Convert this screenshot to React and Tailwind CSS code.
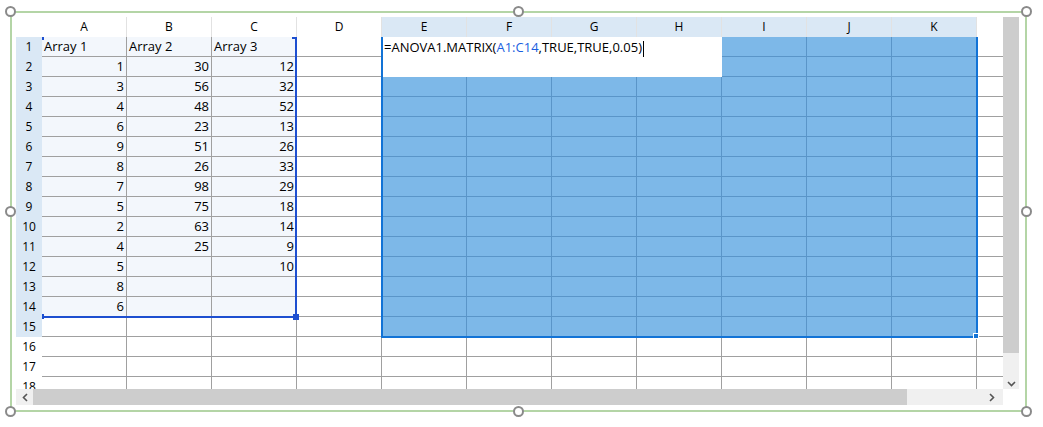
import React from 'react';

const cols = ['A', 'B', 'C', 'D', 'E', 'F', 'G', 'H', 'I', 'J', 'K', 'L'];
const data = [
  ['Array 1', 'Array 2', 'Array 3'],
  [1, 30, 12], [3, 56, 32], [4, 48, 52], [6, 23, 13], [9, 51, 26], [8, 26, 33],
  [7, 98, 29], [5, 75, 18], [2, 63, 14], [4, 25, 9], [5, '', 10], [8, '', ''], [6, '', ''],
];

const Handle = ({ cls }) => (
  <div className={`absolute w-[11px] h-[11px] rounded-full border-2 border-[#8a8a8a] bg-white ${cls}`} />
);

const App = () => {
  const rows = Array.from({ length: 18 }, (_, i) => i + 1);
  return (
    <div className="relative w-[1043px] h-[427px] bg-white overflow-hidden" style={{ fontFamily: '"Open Sans", "Noto Sans", sans-serif' }}>
      <div className="absolute left-[10px] top-[11px] w-[1017px] h-[401px] border-2 border-[#b4d5a6]" />
      <Handle cls="left-[5px] top-[6px]" />
      <Handle cls="left-[513px] top-[6px]" />
      <Handle cls="left-[1021px] top-[6px]" />
      <Handle cls="left-[5px] top-[206px]" />
      <Handle cls="left-[1021px] top-[206px]" />
      <Handle cls="left-[5px] top-[406px]" />
      <Handle cls="left-[513px] top-[406px]" />
      <Handle cls="left-[1021px] top-[406px]" />

      <div className="absolute left-[16px] top-[17px] w-[1003px] h-[388px] flex flex-col text-[13px] text-black">
        <div className="flex h-[372px]">
          <div className="relative w-[987px] overflow-hidden">
            {/* column header */}
            <div className="flex h-[20px]">
              <div className="w-[26px] shrink-0" />
              {cols.map((c, ci) => (
                <div key={c} className={`w-[85px] shrink-0 flex items-center justify-center text-[12px] border-r border-[#e2e2e2] ${ci >= 4 && ci <= 10 ? 'bg-[#dae8f5]' : 'bg-white'}`}>{c}</div>
              ))}
            </div>
            {rows.map((r) => (
              <div key={r} className="flex h-[20px]">
                <div className={`w-[26px] shrink-0 flex items-center justify-center text-[12px] ${r <= 15 ? 'bg-[#dae8f5]' : 'bg-white'}`}>{r}</div>
                {cols.map((c, ci) => {
                  const inData = r <= 14 && ci <= 2;
                  const inSel = r <= 15 && ci >= 4 && ci <= 10;
                  const val = inData ? data[r - 1][ci] : '';
                  return (
                    <div
                      key={c}
                      className={`w-[85px] shrink-0 border-r border-b px-[2px] flex items-center ${inSel ? 'bg-[#7db8e8] border-[#5a95c8]' : inData ? 'bg-[#f3f7fc] border-[#a0a0a0]' : 'bg-white border-[#a0a0a0]'} ${typeof val === 'number' ? 'justify-end' : 'justify-start'}`}
                    >
                      {val}
                    </div>
                  );
                })}
              </div>
            ))}

            {/* data range outline */}
            <div className="absolute left-[279px] top-[20px] w-[2px] h-[282px] bg-[#1d4fd0]" />
            <div className="absolute left-[26px] top-[299px] w-[255px] h-[2px] bg-[#1d4fd0]" />
            <div className="absolute left-[26px] top-[20px] w-[2px] h-[3px] bg-[#1d4fd0]" />
            <div className="absolute left-[276px] top-[20px] w-[5px] h-[2px] bg-[#1d4fd0]" />
            <div className="absolute left-[26px] top-[297px] w-[2px] h-[5px] bg-[#1d4fd0]" />
            <div className="absolute left-[277px] top-[297px] w-[6px] h-[6px] bg-[#1d4fd0]" />

            {/* selection outline */}
            <div className="absolute left-[365px] top-[20px] w-[597px] h-[301px] border-r-2 border-b-2 border-l-2 border-[#1273d6]" />
            <div className="absolute left-[957px] top-[316px] w-[6px] h-[6px] bg-[#1273d6] border border-white" />

            {/* in-cell editor */}
            <div className="absolute left-[367px] top-[20px] w-[339px] h-[40px] bg-white px-[1px] pt-[1px] text-[13px] leading-[18px]">
              =ANOVA1.MATRIX(<span className="text-[#1a5fe0]">A1:C14</span>,TRUE,TRUE,0.05)<span className="inline-block w-[1px] h-[16px] bg-black align-middle ml-[1px]" />
            </div>
          </div>
          {/* vertical scrollbar */}
          <div className="w-[16px] bg-[#f0f0f0] flex flex-col">
            <div className="h-[336px] bg-[#cdcdcd]" />
            <div className="flex-1 flex items-end justify-center pb-[2px]">
              <svg width="9" height="6" viewBox="0 0 9 6"><path d="M1 1l3.5 3.5L8 1" stroke="#555" strokeWidth="1.6" fill="none" /></svg>
            </div>
          </div>
        </div>
        {/* horizontal scrollbar */}
        <div className="h-[16px] flex bg-[#f0f0f0] w-[987px]">
          <div className="w-[17px] flex items-center justify-center">
            <svg width="6" height="9" viewBox="0 0 6 9"><path d="M5 1L1.5 4.5 5 8" stroke="#555" strokeWidth="1.6" fill="none" /></svg>
          </div>
          <div className="w-[874px] bg-[#cdcdcd]" />
          <div className="flex-1 flex items-center justify-end pr-[8px]">
            <svg width="6" height="9" viewBox="0 0 6 9"><path d="M1 1l3.5 3.5L1 8" stroke="#555" strokeWidth="1.6" fill="none" /></svg>
          </div>
        </div>
      </div>
    </div>
  );
};

export default App;
